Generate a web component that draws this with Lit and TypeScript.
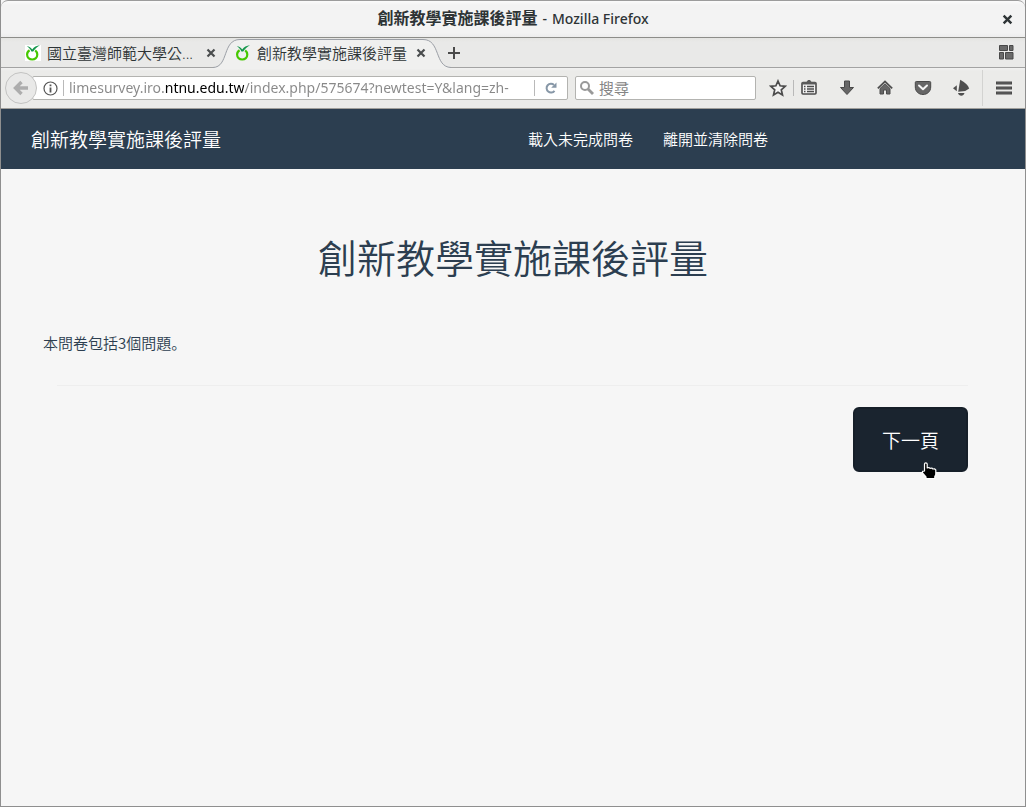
import { LitElement, html, css, svg } from "lit";
import { customElement } from "lit/decorators.js";

const favicon = html`<svg class="favicon" width="16" height="16" viewBox="0 0 16 16" aria-hidden="true">
  <path d="M4.600 5.300C2.900 6.300 2.100 7.800 2.100 9.600c0 2.900 2.200 4.900 5.100 4.900s5.100-2 5.100-4.900c0-1.700-.8-3.200-2.100-4.200" fill="none" stroke="#46c800" stroke-width="2.200"/>
  <path d="M1.800 1.300C4.200 1.500 6 2.600 7.200 4.400 9 2 11.500.6 15 .2 12.200 1.800 9.800 3.800 8.200 6.500H6.400C5.400 4.200 3.900 2.500 1.800 1.300z" fill="#12964a"/>
</svg>`;

const cross = (size: number) => html`<svg width=${size} height=${size} viewBox="0 0 10 10" aria-hidden="true">
  <path d="M1.500 1.500l7 7M8.500 1.500l-7 7" stroke="currentColor" stroke-width="2.200" fill="none"/>
</svg>`;

const icons = {
  star: svg`<path d="M9 2l2.100 4.800 5.100.5-3.900 3.500 1.200 5.200L9 13.300 4.500 16l1.200-5.200-3.900-3.500 5.100-.5z" fill="#f4f4f4" stroke="#4c4c4c" stroke-width="1.700"/>`,
  list: svg`<path d="M3 3.500h12q1 0 1 1V14q0 1-1 1H3q-1 0-1-1V4.500q0-1 1-1z" fill="#f4f4f4" stroke="#4c4c4c" stroke-width="1.600"/><path d="M2 3h4.500L8 1h2l1.500 2H16v2.500H2z" fill="#5a5a5a"/><path d="M4 7.500h1.500M7 7.500h7M4 10h1.500M7 10h7M4 12.500h1.500M7 12.500h7" stroke="#4c4c4c" stroke-width="1.300"/>`,
  down: svg`<path d="M6.500 2h5v6.500h4L9 15.500 2.500 8.500h4z" fill="#666" stroke="#484848"/>`,
  home: svg`<path d="M4 9.500L9 4.800l5 4.700v5.500h-3.500V11h-3v4H4z" fill="#666" stroke="#4c4c4c"/><path d="M1.800 9.300L9 2.500l7.200 6.800" fill="none" stroke="#4c4c4c" stroke-width="1.700"/>`,
  pocket: svg`<path d="M2.300 2.500h13.400q1 0 1 1V8c0 4.500-3.400 7.500-7.700 7.500S1.300 12.500 1.300 8V3.500q0-1 1-1z" fill="#666" stroke="#484848"/><path d="M5 6.500l4 3.800 4-3.800" fill="none" stroke="#f4f4f4" stroke-width="2" stroke-linecap="round" stroke-linejoin="round"/>`,
  beacon: svg`<path d="M8.200.8q8 4.500 9 8.700l-4 2.500-7 .8z" fill="#4f4f4f"/><path d="M4.800 6.200v6L1 9.300z" fill="#4f4f4f"/><path d="M6 14h6.500c-.5 1.700-1.700 2.800-3.200 2.800S6.500 15.700 6 14z" fill="#4f4f4f"/>`,
  menu: svg`<path d="M1 4h16M1 9h16M1 14h16" stroke="#4a4a4a" stroke-width="3"/><path d="M2 4h14M2 9h14M2 14h14" stroke="#606060" stroke-width="1"/>`,
};

const toolIcon = (shape: unknown) =>
  html`<svg width="18" height="18" viewBox="0 0 18 18" aria-hidden="true">${shape}</svg>`;

@customElement("browser-chrome")
class BrowserChrome extends LitElement {
  static styles = css`
    :host { display: block; font-family: "Noto Sans", "Noto Sans CJK TC", sans-serif; color: #2e3436; }
    button { border: 0; padding: 0; margin: 0; background: none; font: inherit; color: inherit; display: flex; align-items: center; justify-content: center; }
    svg { display: block; }
    .titlebar { height: 38px; box-sizing: border-box; display: grid; grid-template-columns: 36px 1fr 36px; align-items: center; background: linear-gradient(#fbfbfb, #f3f3f3 4px, #f3f3f3 32px, #ededed); border-top: 1px solid #9c9c9c; border-bottom: 1px solid #8d8d89; border-radius: 7px 7px 0 0; }
    .title { grid-column: 2; display: flex; align-items: baseline; justify-content: center; gap: 5px; padding-bottom: 2px; font-size: 14px; line-height: 20px; font-weight: 500; }
    .title b { font-size: 16px; font-weight: 700; }
    .tabs { height: 30px; box-sizing: border-box; display: flex; padding-left: 15px; background: linear-gradient(#e4e4e2, #e9e9e8 4px); border-bottom: 1px solid #a3a3a3; align-items: center; }
    .tab { width: 210px; height: 30px; padding: 0 9px; box-sizing: border-box; display: flex; align-items: center; position: relative; flex: none; }
    .shape { position: absolute; left: -13px; top: 1px; }
    .tablabel { position: relative; flex: 1; justify-content: flex-start; gap: 6px; font-size: 15px; line-height: 20px; font-weight: 350; white-space: nowrap; }
    .close { position: relative; width: 12px; height: 16px; color: #4a4d4e; }
    .favicon { flex: none; }
    .plain .favicon { background: #fff; }
    .plus { width: 16px; height: 28px; margin-left: 10px; }
    .groups { margin-left: auto; margin-right: 11px; }
    .bar { height: 41px; box-sizing: border-box; display: flex; align-items: center; background: linear-gradient(#f1f1f1, #ebebe9 3px); border-bottom: 1px solid #a09f9b; }
    .back { width: 32px; height: 32px; box-sizing: border-box; border: 1px solid #c3c3c2; border-radius: 50%; background: #e9e9e8; margin-left: 4px; position: relative; z-index: 1; flex: none; }
    .field { height: 24px; box-sizing: border-box; background: #fff; border: 1px solid #b3b3b0; border-radius: 2px; display: flex; align-items: center; }
    .url { flex: 1; margin-left: -5px; padding-left: 8px; }
    .info { width: 18px; height: 18px; margin-right: 4px; }
    .sep { width: 1px; height: 16px; background: #b9b9b9; flex: none; }
    input { border: 0; outline: 0; padding: 0 0 2px; margin: 0; background: none; min-width: 0; flex: 1; box-sizing: border-box; height: 22px; font: inherit; font-size: 14px; color: #858585; }
    .address { margin: 0 24px 0 5px; color: transparent; background: linear-gradient(90deg, #888 96px, #000 96px, #000 175px, #888 175px); -webkit-background-clip: text; background-clip: text; }
    .reload { width: 32px; height: 22px; }
    .search { width: 181px; margin-left: 7px; gap: 4px; padding-left: 3px; }
    .search input { font-size: 15px; }
    .tools { display: flex; align-items: center; margin-left: 13px; }
    .tools button { width: 18px; height: 24px; }
    .tools .starbtn { margin-right: 6px; }
    .mids { display: flex; gap: 20px; margin-left: 6px; }
    .edge { width: 1px; height: 36px; background: #d3d3d1; margin: 0 12px; }
    .tools .menubtn { margin-right: 12px; }
  `;

  render() {
    return html`
      <div class="titlebar">
        <div class="title"><b>創新教學實施課後評量</b><span>-</span><span>Mozilla Firefox</span></div>
        <button aria-label="關閉視窗">${cross(11)}</button>
      </div>
      <div class="tabs">
        <div class="tab plain">
          <button class="tablabel">${favicon}國立臺灣師範大學公...</button>
          <button class="close" aria-label="關閉分頁">${cross(10)}</button>
        </div>
        <div class="tab">
          <svg class="shape" width="238" height="30" viewBox="0 0 238 30" aria-hidden="true">
            <path d="M0 28.500C16 28 9 .5 27 .5H210C228 .5 221 28 238 28.500V30H0z" fill="#f0f0ef"/>
            <path d="M0 28.500C16 28 9 .5 27 .5H210C228 .5 221 28 238 28.500" fill="none" stroke="#9b9fa6"/>
          </svg>
          <button class="tablabel">${favicon}創新教學實施課後評量</button>
          <button class="close" aria-label="關閉分頁">${cross(10)}</button>
        </div>
        <button class="plus" aria-label="開新分頁">
          <svg width="12" height="12" viewBox="0 0 12 12"><path d="M6 0v12M0 6h12" stroke="#4a4a4a" stroke-width="2"/></svg>
        </button>
        <button class="groups" aria-label="分頁群組">
          <svg width="15" height="15" viewBox="0 0 15 15"><path d="M.5.500h8v5h-8zM10.500.500h3.500v5h-3.500zM.5 7.500h4v6.500h-4zM6.500 7.500h7.500v6.500h-7.500z" fill="#6a6a6a" stroke="#484848"/></svg>
        </button>
      </div>
      <div class="bar">
        <button class="back" aria-label="上一頁">
          <svg width="16" height="16" viewBox="0 0 16 16"><path d="M8.500 2L2.500 8l6 6M3 8h12" fill="none" stroke="#adadad" stroke-width="3.400"/></svg>
        </button>
        <div class="field url">
          <button class="info" aria-label="網站資訊">
            <svg width="15" height="15" viewBox="0 0 15 15"><circle cx="7.500" cy="7.500" r="6.500" fill="none" stroke="#555" stroke-width="1.200"/><path d="M7.500 3.500v1.800M7.500 6.500v5" stroke="#555" stroke-width="1.800"/></svg>
          </button>
          <span class="sep"></span>
          <input class="address" aria-label="網址" spellcheck="false" value="limesurvey.iro.ntnu.edu.tw/index.php/575674?newtest=Y&amp;lang=zh-Hant-TW" />
          <span class="sep"></span>
          <button class="reload" aria-label="重新載入">
            <svg width="12" height="12" viewBox="0 0 12 12"><path d="M9.500 8.800A4.400 4.400 0 1 1 9 2.900" fill="none" stroke="#8797a7" stroke-width="2"/><path d="M11.500.500v5.300H6.200z" fill="#8797a7"/></svg>
          </button>
        </div>
        <div class="field search">
          <svg width="16" height="16" viewBox="0 0 16 16" aria-hidden="true"><circle cx="6" cy="6" r="4" fill="none" stroke="#999" stroke-width="2"/><path d="M9 9l5 5" stroke="#999" stroke-width="2.800"/></svg>
          <input aria-label="搜尋" value="搜尋" />
        </div>
        <div class="tools">
          <button class="starbtn" aria-label="加入書籤">${toolIcon(icons.star)}</button>
          <span class="sep"></span>
          <div class="mids">
            <button aria-label="書籤">${toolIcon(icons.list)}</button>
            <button aria-label="下載">${toolIcon(icons.down)}</button>
            <button aria-label="首頁">${toolIcon(icons.home)}</button>
            <button aria-label="Pocket">${toolIcon(icons.pocket)}</button>
            <button aria-label="附加元件">${toolIcon(icons.beacon)}</button>
          </div>
          <span class="edge"></span>
          <button class="menubtn" aria-label="選單">${toolIcon(icons.menu)}</button>
        </div>
      </div>
    `;
  }
}

@customElement("survey-page")
class SurveyPage extends LitElement {
  static styles = css`
    :host { display: block; background: #f6f6f6; color: #2c3e50; font-family: "Noto Sans CJK TC", sans-serif; font-weight: 350; }
    nav { min-height: 60px; display: grid; grid-template-columns: 1fr 1fr; align-items: center; background: #2c3e50; }
    a { color: #fff; text-decoration: none; }
    .brand { padding-left: 30px; font-size: 19px; line-height: 24px; }
    .links { display: flex; gap: 30px; padding-left: 15px; font-size: 15px; line-height: 20px; }
    main { padding: 0 42px; }
    h1 { margin: 57px 0 0; text-align: center; font-size: 39px; line-height: 60px; font-weight: 350; }
    p { margin: 47px 0 0; font-family: "Noto Sans CJK SC", sans-serif; font-size: 15px; line-height: 20px; }
    .actions { margin: 32px 15px 0 14px; border-top: 1px solid #eee; padding-top: 21px; display: flex; justify-content: flex-end; }
    .next { position: relative; border: 2px solid #161f29; border-radius: 6px; padding: 18px 27px; background: #1a242f; color: #fff; font: inherit; font-size: 19px; line-height: 25px; cursor: pointer; }
    .cursor { position: absolute; right: 29px; bottom: -10px; display: block; }
  `;

  render() {
    return html`
      <nav>
        <a class="brand" href="#">創新教學實施課後評量</a>
        <div class="links"><a href="#">載入未完成問卷</a><a href="#">離開並清除問卷</a></div>
      </nav>
      <main>
        <h1>創新教學實施課後評量</h1>
        <p>本問卷包括3個問題。</p>
        <div class="actions">
          <button class="next">下一頁
            <svg class="cursor" width="16" height="18" viewBox="0 0 16 18" aria-hidden="true">
              <path d="M3.500 2Q3.500.8 4.800.8T6.200 2v4l1.600-.5 1.200.8 1.800-.3 1 1 1.700-.2 1.300 1.200v4.500l-1 2v2H5v-1.700L1.500 11V9.300L3.500 9z" fill="#000" stroke="#fff" stroke-width="1.200" stroke-linejoin="round"/>
            </svg>
          </button>
        </div>
      </main>
    `;
  }
}

@customElement("app-root")
class AppRoot extends LitElement {
  static styles = css`
    :host { display: flex; flex-direction: column; min-height: 100vh; box-sizing: border-box; border: solid #8f8f8f; border-width: 0 1px 1px; background: #f6f6f6; }
    .page { flex: 1; }
  `;

  render() {
    return html`<browser-chrome></browser-chrome><survey-page class="page"></survey-page>`;
  }
}
